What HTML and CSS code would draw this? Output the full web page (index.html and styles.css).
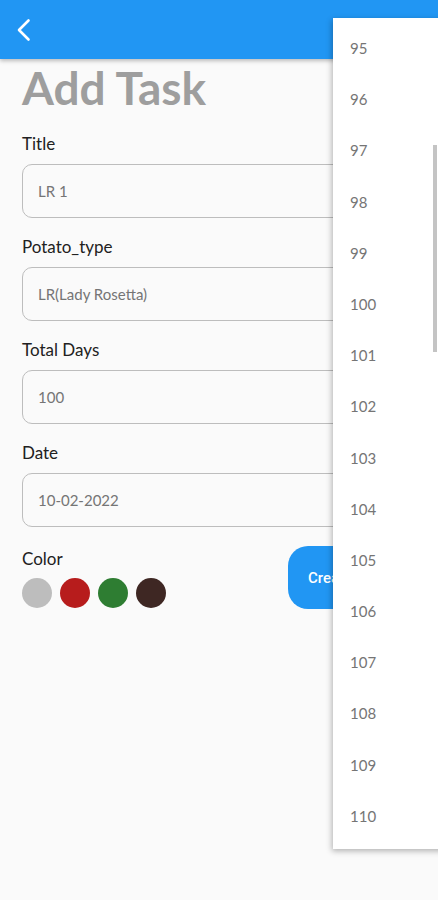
FILE: index.html
```html
<!DOCTYPE html>
<html lang="en">
<head>
    <meta charset="UTF-8">
    <meta name="viewport" content="width=device-width, initial-scale=1.0">
    <title>Add Task</title>
    <link rel="stylesheet" href="styles.css">
</head>
<body>
    <!-- App bar -->
    <div class="app-bar">
        <svg class="back-icon" width="16" height="24" viewBox="0 0 16 24">
            <polyline points="12.5,2.5 3,12 12.5,21.5" fill="none" stroke="#fff" stroke-width="2.6" stroke-linecap="round" stroke-linejoin="round"/>
        </svg>
    </div>

    <!-- Main Content -->
    <div class="main-content">
        <h1 class="page-title">Add Task</h1>

        <div class="field">
            <div class="field-label">Title</div>
            <div class="field-input">LR 1</div>
        </div>
        <div class="field">
            <div class="field-label">Potato_type</div>
            <div class="field-input">LR(Lady Rosetta)</div>
        </div>
        <div class="field">
            <div class="field-label">Total Days</div>
            <div class="field-input">100</div>
        </div>
        <div class="field">
            <div class="field-label">Date</div>
            <div class="field-input">10-02-2022</div>
        </div>

        <div class="bottom-row">
            <div class="color-picker">
                <div class="field-label">Color</div>
                <div class="swatches">
                    <span class="swatch grey"></span>
                    <span class="swatch red"></span>
                    <span class="swatch green"></span>
                    <span class="swatch brown"></span>
                </div>
            </div>
            <button class="create-btn">Create Task</button>
        </div>
    </div>

    <!-- Days dropdown -->
    <div class="dropdown-menu">
        <ul>
            <li>95</li>
            <li>96</li>
            <li>97</li>
            <li>98</li>
            <li>99</li>
            <li>100</li>
            <li>101</li>
            <li>102</li>
            <li>103</li>
            <li>104</li>
            <li>105</li>
            <li>106</li>
            <li>107</li>
            <li>108</li>
            <li>109</li>
            <li>110</li>
        </ul>
        <div class="scroll-thumb"></div>
    </div>
</body>
</html>
```

FILE: styles.css
```css
/* Basic Reset */
body, h1, ul {
    margin: 0;
    padding: 0;
}

body {
    background-color: #fafafa;
    font-family: Lato, 'Open Sans', sans-serif;
    color: #212121;
    width: 438px;
    height: 900px;
    overflow: hidden;
    position: relative;
}

.app-bar {
    height: 59px;
    background-color: #2196f3;
    box-shadow: 0 2px 4px rgba(0, 0, 0, 0.25);
    display: flex;
    align-items: center;
    padding-left: 16px;
}

.back-icon {
    display: block;
}

.main-content {
    padding: 0 22px;
}

.page-title {
    font-size: 46px;
    font-weight: 700;
    color: #9e9e9e;
    line-height: 44px;
    margin-top: 7px;
    margin-bottom: 24px;
}

.field {
    margin-bottom: 19px;
}

.field-label {
    font-size: 17px;
    line-height: 20px;
    color: #212121;
}

.field-input {
    margin-top: 10px;
    height: 54px;
    box-sizing: border-box;
    border: 1px solid #bdbdbd;
    border-radius: 10px;
    padding-left: 15px;
    display: flex;
    align-items: center;
    font-size: 15px;
    color: #757575;
}

.bottom-row {
    display: flex;
    justify-content: space-between;
    align-items: flex-start;
    margin-top: 2px;
}

.color-picker .field-label {
    margin-top: 3px;
}

.swatches {
    display: flex;
    gap: 8px;
    margin-top: 9px;
}

.swatch {
    width: 30px;
    height: 30px;
    border-radius: 50%;
}

.swatch.grey { background-color: #bdbdbd; }
.swatch.red { background-color: #b71c1c; }
.swatch.green { background-color: #2e7d32; }
.swatch.brown { background-color: #3e2723; }

.create-btn {
    width: 128px;
    height: 63px;
    border: none;
    border-radius: 20px;
    background-color: #2196f3;
    color: #fff;
    font-family: Roboto, sans-serif;
    font-weight: 500;
    font-size: 15px;
    text-align: left;
    padding-left: 20px;
}

.dropdown-menu {
    position: absolute;
    top: 18px;
    left: 333px;
    width: 120px;
    height: 831px;
    background-color: #fff;
    box-shadow: -1px 2px 6px rgba(0, 0, 0, 0.3);
}

.dropdown-menu ul {
    list-style: none;
    padding-top: 5px;
}

.dropdown-menu li {
    height: 51.2px;
    line-height: 51.2px;
    padding-left: 17px;
    font-size: 15px;
    color: #757575;
}

.scroll-thumb {
    position: absolute;
    top: 127px;
    left: 100px;
    width: 4px;
    height: 207px;
    background-color: #c4c4c4;
}
```
